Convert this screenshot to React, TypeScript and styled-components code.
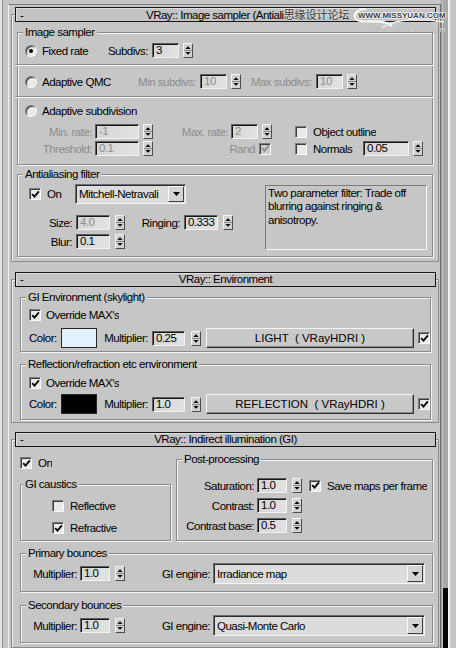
import React from 'react'
import styled, { createGlobalStyle } from 'styled-components'

// palette
const BG = '#c6c6c6'
const OFF = '#8c8c8c'
const FONT = '"Liberation Sans", Arial, sans-serif'

const GlobalStyle = createGlobalStyle`
  html, body { margin: 0; padding: 0; background: ${BG}; }
  body { font-family: ${FONT}; font-size: 11.5px; letter-spacing: -0.5px; color: #000; }
`

// ---- frame of the window
const Screen = styled.div`
  position: relative;
  display: flex;
  width: 456px;
  height: 648px;
  overflow: hidden;
  background: ${BG};
`

const LeftEdge = styled.div`
  flex: none;
  width: 8px;
  box-shadow: inset 2px 0 0 #e4e4e4, inset 3px 0 0 #8e8e8e;
`

const Panel = styled.div`
  flex: none;
  width: 433px;
  box-sizing: border-box;
  margin-top: 4px;
  border-top: 1px solid #7a7a7a;
  border-left: 1px solid #f0f0f0;
  border-right: 1px solid #6e6e6e;
  display: flex;
  flex-direction: column;
`

const Scroll = styled.div`
  flex: none;
  width: 15px;
  display: flex;
  box-shadow: inset 1px 0 0 #9a9a9a;
`

const Track = styled.div`
  width: 5px;
  margin-left: 2px;
  background: #a8a8a8;
  border-right: 2px solid #f2f2f2;
  display: flex;
  flex-direction: column;
  justify-content: flex-end;
`

const Thumb = styled.div`
  height: 60px;
  background: #060606;
`

// ---- rollouts
const Frame = styled.section<{ $mt: number; $pb: number }>`
  margin: ${p => p.$mt}px 1px 0 2px;
  padding-bottom: ${p => p.$pb}px;
  border: 1px solid #8c8c8c;
  box-shadow: inset 1px 1px 0 #ececec;
  display: flex;
  flex-direction: column;
`

const Header = styled.div`
  display: grid;
  grid-template-columns: 20px 1fr 20px;
  align-items: center;
  height: 15px;
  box-sizing: border-box;
  margin: -8px 2px 0 3px;
  border: 1px solid #161616;
  background: #c3c3c3;
  box-shadow: inset 1px 1px 0 #dedede;
  line-height: 13px;
`

const Minus = styled.span`
  padding-left: 4px;
`

const Title = styled.span<{ $indent?: number }>`
  text-align: ${p => (p.$indent ? 'left' : 'center')};
  padding-left: ${p => p.$indent ?? 0}px;
  white-space: nowrap;
`

// watermark lettering that sits in the first header
const CnMark = styled.span`
  font-family: 'Noto Sans CJK SC', sans-serif;
  font-size: 11px;
  letter-spacing: 0;
  color: #333;
  text-shadow: 0 0 2px #fff;
`

const GroupBox = styled.div<{ $mt: number; $ml: number; $mr: number; $pb: number; $grow?: boolean }>`
  margin: ${p => p.$mt}px ${p => p.$mr}px 0 ${p => p.$ml}px;
  padding-bottom: ${p => p.$pb}px;
  border: 1px solid #8a8a8a;
  box-shadow: 1px 1px 0 #f4f4f4, inset 1px 1px 0 #f4f4f4;
  display: flex;
  flex-direction: column;
  ${p => (p.$grow ? 'flex: 1;' : '')}
`

const Legend = styled.div<{ $x: number }>`
  align-self: flex-start;
  height: 14px;
  line-height: 14px;
  margin: -8px 0 0 ${p => p.$x}px;
  padding: 0 2px;
  background: ${BG};
  white-space: nowrap;
`

const Row = styled.div<{ $mt: number; $h: number; $pl?: number }>`
  display: flex;
  align-items: center;
  height: ${p => p.$h}px;
  margin-top: ${p => p.$mt}px;
  padding-left: ${p => p.$pl ?? 0}px;
  white-space: nowrap;
`

const Lbl = styled.span<{ $w?: number; $right?: boolean; $pr?: number; $ml?: number; $off?: boolean }>`
  flex: none;
  box-sizing: border-box;
  width: ${p => (p.$w ? `${p.$w}px` : 'auto')};
  margin-left: ${p => p.$ml ?? 0}px;
  padding-right: ${p => p.$pr ?? 0}px;
  text-align: ${p => (p.$right ? 'right' : 'left')};
  color: ${p => (p.$off ? OFF : '#000')};
  overflow: hidden;
`

const Sep = styled.div<{ $mt: number }>`
  margin: ${p => p.$mt}px -1px 0 -3px;
  border-top: 1px solid #8c8c8c;
  border-bottom: 1px solid #f6f6f6;
`

const Body = styled.div`
  display: flex;
  align-items: flex-start;
`

const Col = styled.div<{ $w: number; $ml?: number }>`
  flex: none;
  width: ${p => p.$w}px;
  margin-left: ${p => p.$ml ?? 0}px;
  display: flex;
  flex-direction: column;
`

const Stretch = styled.div`
  display: flex;
  align-items: stretch;
`

// ---- controls
const Field = styled.span<{ $w: number; $off?: boolean }>`
  flex: none;
  box-sizing: border-box;
  width: ${p => p.$w}px;
  height: 15px;
  padding-left: 3px;
  line-height: 13px;
  background: linear-gradient(to right, #d6d6d6, #e2e2e2);
  border: 1px solid;
  border-color: #5e5e5e #f2f2f2 #f2f2f2 #5e5e5e;
  box-shadow: inset 1px 1px 0 #161616;
  color: ${p => (p.$off ? OFF : '#000')};
  overflow: hidden;
`

const SpinBtn = styled.span<{ $ml: number }>`
  flex: none;
  box-sizing: border-box;
  width: 10px;
  height: 15px;
  margin-left: ${p => p.$ml}px;
  border: 1px solid;
  border-color: #f4f4f4 #4e4e4e #4e4e4e #f4f4f4;
  background: #d2d2d2;
  display: flex;
`

const Box = styled.span<{ $ml?: number; $off?: boolean; $round?: boolean }>`
  flex: none;
  box-sizing: border-box;
  width: 12px;
  height: 12px;
  margin-left: ${p => p.$ml ?? 0}px;
  background: ${p => (p.$off ? '#cbcbcb' : '#e9e9e9')};
  border: 1px solid;
  border-color: #7c7c7c #fafafa #fafafa #7c7c7c;
  border-radius: ${p => (p.$round ? '50%' : '0')};
  box-shadow: inset 1px 1px 0 #3c3c3c;
  display: flex;
  align-items: center;
  justify-content: center;
`

const Dot = styled.span`
  width: 4px;
  height: 4px;
  border-radius: 50%;
  background: #000;
`

const Drop = styled.div<{ $w: number; $h: number; $ml?: number }>`
  flex: none;
  box-sizing: border-box;
  display: flex;
  align-items: center;
  width: ${p => p.$w}px;
  height: ${p => p.$h}px;
  margin-left: ${p => p.$ml ?? 0}px;
  padding: 0 1px 0 3px;
  background: #dcdcdc;
  border: 1px solid;
  border-color: #6c6c6c #f6f6f6 #f6f6f6 #6c6c6c;
  box-shadow: inset 1px 1px 0 #2c2c2c;
`

const DropText = styled.span`
  flex: 1;
  overflow: hidden;
`

const DropBtn = styled.span<{ $h: number }>`
  flex: none;
  box-sizing: border-box;
  width: 16px;
  height: ${p => p.$h}px;
  background: #d4d4d4;
  border: 1px solid;
  border-color: #fafafa #404040 #404040 #fafafa;
  display: flex;
  align-items: center;
  justify-content: center;
`

const Swatch = styled.span<{ $c: string }>`
  flex: none;
  box-sizing: border-box;
  width: 36px;
  height: 20px;
  background: ${p => p.$c};
  border: 1px solid #262626;
`

const Btn = styled.span<{ $w: number }>`
  flex: none;
  box-sizing: border-box;
  width: ${p => p.$w}px;
  height: 20px;
  margin-left: 5px;
  display: flex;
  align-items: center;
  justify-content: center;
  background: #c9c9c9;
  border: 1px solid;
  border-color: #f4f4f4 #2e2e2e #2e2e2e #f4f4f4;
  box-shadow: inset -1px -1px 0 #8a8a8a;
  white-space: pre;
  letter-spacing: 0;
`

const Info = styled.div`
  flex: none;
  box-sizing: border-box;
  width: 162px;
  height: 65px;
  margin-top: 4px;
  padding: 1px 2px;
  line-height: 13.3px;
  border: 1px solid;
  border-color: #7a7a7a #fafafa #fafafa #7a7a7a;
`

// ---- site logo stamped over the top right corner
const Logo = styled.div`
  position: absolute;
  left: 352px;
  top: 4px;
  width: 102px;
  height: 32px;
`

const LogoText = styled.span`
  position: absolute;
  left: 6px;
  top: 8px;
  font-weight: bold;
  font-size: 8px;
  line-height: 8px;
  letter-spacing: 0;
  color: #3a3a3a;
  text-shadow: 1px 0 0 #fff, -1px 0 0 #fff, 0 1px 0 #fff, 0 -1px 0 #fff;
`

const LogoSub = styled.span`
  position: absolute;
  left: 18px;
  top: 22px;
  font-size: 7px;
  line-height: 7px;
  letter-spacing: 2.6px;
  color: #f4f4f4;
  text-shadow: 0 0 1px #555;
`

// ---- small parts
const Spinner = ({ w, value, off, gap = 5 }: { w: number; value: string; off?: boolean; gap?: number }) => (
  <>
    <Field $w={w} $off={off}>{value}</Field>
    <SpinBtn $ml={gap}>
      <svg width="8" height="13" viewBox="0 0 8 13">
        <path d="M4 2.2L6.6 5H1.4Z M4 10.8L6.6 8H1.4Z" fill="#000" />
        <path d="M0 6.5H8" stroke="#8a8a8a" strokeWidth="1" />
      </svg>
    </SpinBtn>
  </>
)

const Check = ({ on, off, ml }: { on?: boolean; off?: boolean; ml?: number }) => (
  <Box $ml={ml} $off={off}>
    {on && (
      <svg width="9" height="9" viewBox="0 0 9 9">
        <path d="M1.2 4.2L3.5 6.6L7.9 1.4" fill="none" stroke={off ? OFF : '#000'} strokeWidth="1.8" />
      </svg>
    )}
  </Box>
)

const Radio = ({ on }: { on?: boolean }) => <Box $round>{on && <Dot />}</Box>

const Arrow = () => (
  <svg width="7" height="4" viewBox="0 0 7 4">
    <path d="M0 0H7L3.5 4Z" fill="#000" />
  </svg>
)

type GroupProps = {
  legend: string
  lx?: number
  mt: number
  ml: number
  mr: number
  pb: number
  grow?: boolean
  children: React.ReactNode
}

const Group = ({ legend, lx = 5, mt, ml, mr, pb, grow, children }: GroupProps) => (
  <GroupBox $mt={mt} $ml={ml} $mr={mr} $pb={pb} $grow={grow}>
    <Legend $x={lx}>{legend}</Legend>
    {children}
  </GroupBox>
)

type RolloutProps = {
  title: string
  mt: number
  pb: number
  indent?: number
  mark?: string
  children: React.ReactNode
}

const Rollout = ({ title, mt, pb, indent, mark, children }: RolloutProps) => (
  <Frame $mt={mt} $pb={pb}>
    <Header>
      <Minus>-</Minus>
      <Title $indent={indent}>
        {title}
        {mark && <CnMark>{mark}</CnMark>}
      </Title>
    </Header>
    {children}
  </Frame>
)

const EnvRow = ({ mt, color, mult, map }: { mt: number; color: string; mult: string; map: string }) => (
  <Row $mt={mt} $h={20} $pl={8}>
    <Lbl $w={32}>Color:</Lbl>
    <Swatch $c={color} />
    <Lbl $w={55} $right $pr={4}>Multiplier:</Lbl>
    <Spinner w={33} value={mult} gap={6} />
    <Btn $w={208}>{map}</Btn>
    <Check on ml={4} />
  </Row>
)

const Bounce = ({ legend, mt, pb, engine }: { legend: string; mt: number; pb: number; engine: string }) => (
  <Group legend={legend} mt={mt} ml={8} mr={5} pb={pb}>
    <Row $mt={3} $h={21}>
      <Lbl $w={59} $right $pr={3}>Multiplier:</Lbl>
      <Spinner w={30} value="1.0" />
      <Lbl $w={88} $right $pr={3}>GI engine:</Lbl>
      <Drop $w={212} $h={21}>
        <DropText>{engine}</DropText>
        <DropBtn $h={17}><Arrow /></DropBtn>
      </Drop>
    </Row>
  </Group>
)

export default function App() {
  return (
    <Screen>
      <GlobalStyle />
      <LeftEdge />
      <Panel>
        <Rollout title="VRay:: Image sampler (Antiali" indent={110} mark="思缘设计论坛" mt={9} pb={4}>
          <Group legend="Image sampler" mt={10} ml={5} mr={5} pb={8}>
            <Row $mt={4} $h={15} $pl={7}>
              <Radio on />
              <Lbl $w={64} $ml={5}>Fixed rate</Lbl>
              <Lbl $w={46} $right $pr={4}>Subdivs:</Lbl>
              <Spinner w={27} value="3" gap={4} />
            </Row>
            <Sep $mt={6} />
            <Row $mt={8} $h={15} $pl={7}>
              <Radio />
              <Lbl $w={92} $ml={5}>Adaptive QMC</Lbl>
              <Lbl $w={66} $right $pr={4} $off>Min subdivs:</Lbl>
              <Spinner w={27} value="10" off gap={4} />
              <Lbl $w={75} $right $pr={4} $off>Max subdivs:</Lbl>
              <Spinner w={27} value="10" off gap={4} />
            </Row>
            <Sep $mt={7} />
            <Row $mt={5} $h={15} $pl={7}>
              <Radio />
              <Lbl $ml={5}>Adaptive subdivision</Lbl>
            </Row>
            <Row $mt={6} $h={15} $pl={7}>
              <Lbl $w={70} $right $pr={3} $off>Min. rate:</Lbl>
              <Spinner w={44} value="-1" off gap={4} />
              <Lbl $w={78} $right $pr={3} $off>Max. rate:</Lbl>
              <Spinner w={27} value="2" off gap={4} />
              <Check ml={23} />
              <Lbl $ml={6}>Object outline</Lbl>
            </Row>
            <Row $mt={2} $h={15} $pl={7}>
              <Lbl $w={70} $right $pr={3} $off>Threshold:</Lbl>
              <Spinner w={44} value="0.1" off gap={4} />
              <Lbl $w={106} $right $pr={4} $off>Rand</Lbl>
              <Check on off />
              <Check ml={24} />
              <Lbl $w={50} $ml={6}>Normals</Lbl>
              <Spinner w={46} value="0.05" gap={4} />
            </Row>
          </Group>

          <Group legend="Antialiasing filter" mt={9} ml={5} mr={5} pb={6}>
            <Body>
              <Col $w={240} $ml={7}>
                <Row $mt={3} $h={20}>
                  <Check on ml={4} />
                  <Lbl $w={28} $ml={6}>On</Lbl>
                  <Drop $w={111} $h={20}>
                    <DropText>Mitchell-Netravali</DropText>
                    <DropBtn $h={16}><Arrow /></DropBtn>
                  </Drop>
                </Row>
                <Row $mt={11} $h={15}>
                  <Lbl $w={51} $right $pr={4}>Size:</Lbl>
                  <Spinner w={34} value="4.0" off />
                  <Lbl $w={59} $right $pr={4}>Ringing:</Lbl>
                  <Spinner w={34} value="0.333" />
                </Row>
                <Row $mt={4} $h={15}>
                  <Lbl $w={51} $right $pr={4}>Blur:</Lbl>
                  <Spinner w={34} value="0.1" />
                </Row>
              </Col>
              <Info>
                Two parameter filter: Trade off
                <br />
                blurring against ringing &amp;
                <br />
                anisotropy.
              </Info>
            </Body>
          </Group>
        </Rollout>

        <Rollout title="VRay:: Environment" mt={17} pb={2}>
          <Group legend="GI Environment (skylight)" mt={10} ml={8} mr={7} pb={3}>
            <Row $mt={5} $h={12} $pl={8}>
              <Check on />
              <Lbl $ml={5}>Override MAX's</Lbl>
            </Row>
            <EnvRow mt={7} color="#e4f1ff" mult="0.25" map={'LIGHT  ( VRayHDRI )'} />
          </Group>
          <Group legend="Reflection/refraction etc environment" mt={12} ml={8} mr={7} pb={5}>
            <Row $mt={6} $h={12} $pl={8}>
              <Check on />
              <Lbl $ml={5}>Override MAX's</Lbl>
            </Row>
            <EnvRow mt={5} color="#000000" mult="1.0" map={'REFLECTION  ( VRayHDRI )'} />
          </Group>
        </Rollout>

        <Rollout title="VRay:: Indirect illumination (GI)" mt={16} pb={4}>
          <Stretch>
            <Col $w={151} $ml={8}>
              <Row $mt={10} $h={12}>
                <Check on />
                <Lbl $ml={6}>On</Lbl>
              </Row>
              <Group legend="GI caustics" lx={2} mt={15} ml={0} mr={0} pb={6}>
                <Row $mt={9} $h={12}>
                  <Check ml={31} />
                  <Lbl $ml={6}>Reflective</Lbl>
                </Row>
                <Row $mt={10} $h={12}>
                  <Check on ml={31} />
                  <Lbl $ml={6}>Refractive</Lbl>
                </Row>
              </Group>
            </Col>
            <Group legend="Post-processing" mt={12} ml={5} mr={5} pb={7} grow>
              <Row $mt={12} $h={15}>
                <Lbl $w={80} $right $pr={3}>Saturation:</Lbl>
                <Spinner w={30} value="1.0" />
                <Check on ml={7} />
                <Lbl $ml={6}>Save maps per frame</Lbl>
              </Row>
              <Row $mt={5} $h={15}>
                <Lbl $w={80} $right $pr={3}>Contrast:</Lbl>
                <Spinner w={30} value="1.0" />
              </Row>
              <Row $mt={5} $h={15}>
                <Lbl $w={80} $right $pr={3}>Contrast base:</Lbl>
                <Spinner w={30} value="0.5" />
              </Row>
            </Group>
          </Stretch>
          <Bounce legend="Primary bounces" mt={12} pb={7} engine="Irradiance map" />
          <Bounce legend="Secondary bounces" mt={13} pb={6} engine="Quasi-Monte Carlo" />
        </Rollout>
      </Panel>
      <Scroll>
        <Track>
          <Thumb />
        </Track>
      </Scroll>

      <Logo>
        <svg width="102" height="32" viewBox="0 0 102 32">
          <path d="M14 5C2 5 -1 15 8 17C16 19 30 14 40 22" fill="none" stroke="#fafafa" strokeWidth="2.2" />
          <path d="M30 24C44 14 70 14 92 18" fill="none" stroke="#ececec" strokeWidth="1.6" />
        </svg>
        <LogoText>WWW.MISSYUAN.COM</LogoText>
        <LogoSub>www.hxsd.com</LogoSub>
      </Logo>
    </Screen>
  )
}
